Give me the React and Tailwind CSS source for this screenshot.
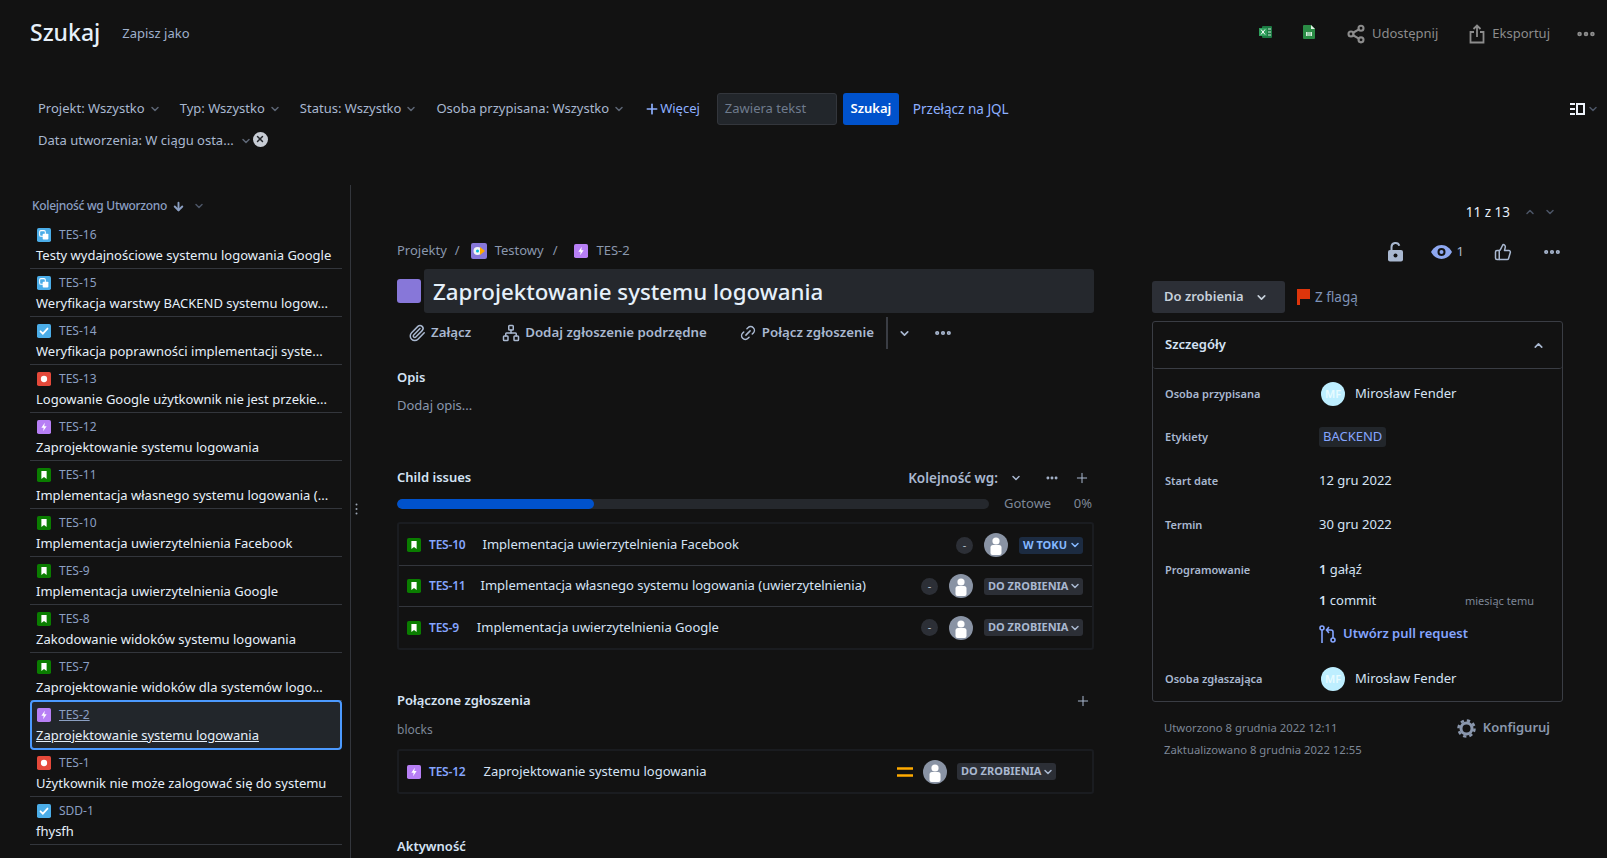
import { ArrowDown, ChevronDown, ChevronUp, Link2, MoreHorizontal, Network, Paperclip, Plus, Share2, ThumbsUp, X } from 'lucide-react'

const ISSUES = [
  { id: 'TES-16', type: 'subtask', title: 'Testy wydajnościowe systemu logowania Google' },
  { id: 'TES-15', type: 'subtask', title: 'Weryfikacja warstwy BACKEND systemu logow...' },
  { id: 'TES-14', type: 'task', title: 'Weryfikacja poprawności implementacji syste...' },
  { id: 'TES-13', type: 'bug', title: 'Logowanie Google użytkownik nie jest przekie...' },
  { id: 'TES-12', type: 'epic', title: 'Zaprojektowanie systemu logowania' },
  { id: 'TES-11', type: 'story', title: 'Implementacja własnego systemu logowania (...' },
  { id: 'TES-10', type: 'story', title: 'Implementacja uwierzytelnienia Facebook' },
  { id: 'TES-9', type: 'story', title: 'Implementacja uwierzytelnienia Google' },
  { id: 'TES-8', type: 'story', title: 'Zakodowanie widoków systemu logowania' },
  { id: 'TES-7', type: 'story', title: 'Zaprojektowanie widoków dla systemów logo...' },
  { id: 'TES-2', type: 'epic', title: 'Zaprojektowanie systemu logowania', selected: true },
  { id: 'TES-1', type: 'bug', title: 'Użytkownik nie może zalogować się do systemu' },
  { id: 'SDD-1', type: 'task', title: 'fhysfh' },
]

const FILTERS = ['Projekt: Wszystko', 'Typ: Wszystko', 'Status: Wszystko', 'Osoba przypisana: Wszystko']

function IssueIcon({ type, size = 14 }) {
  const bg = { subtask: '#4bade8', task: '#4bade8', bug: '#e5493a', epic: '#b77ff5', story: '#0a7d00' }[type]
  return (
    <svg width={size} height={size} viewBox="0 0 16 16" className="shrink-0">
      <rect width="16" height="16" rx="2" fill={bg} />
      {type === 'subtask' && (
        <>
          <rect x="3" y="3" width="6.5" height="6.5" rx="1.5" fill="none" stroke="#fff" strokeWidth="1.2" />
          <rect x="6.5" y="6.5" width="6.5" height="6.5" rx="1" fill="#fff" />
        </>
      )}
      {type === 'task' && <path d="M4 8.3l2.7 2.7L12 5.2" fill="none" stroke="#fff" strokeWidth="2" strokeLinecap="round" />}
      {type === 'bug' && <circle cx="8" cy="8" r="3.6" fill="#fff" />}
      {type === 'epic' && <path d="M8.900 3.200L5 8.900h2.600l-.6 3.900 4-5.800H8.300z" fill="#fff" />}
      {type === 'story' && <path d="M5 3.500h6v9L8 10.200 5 12.500z" fill="#fff" />}
    </svg>
  )
}

function Avatar() {
  return (
    <svg width="24" height="24" viewBox="0 0 24 24" className="shrink-0">
      <circle cx="12" cy="12" r="12" fill="#8993a4" />
      <circle cx="12" cy="8" r="3.600" fill="#fff" />
      <path d="M6.500 14.500a2.500 2.500 0 0 1 2.500-2.500h6a2.500 2.500 0 0 1 2.500 2.500V20a2 2 0 0 1-2 2h-7a2 2 0 0 1-2-2z" fill="#fff" />
    </svg>
  )
}

function UserBadge() {
  return (
    <div className="flex h-6 w-6 shrink-0 items-center justify-center rounded-full bg-[#bdeeff] text-[11px] font-semibold text-[#e8fbff]">
      MF
    </div>
  )
}

function StatusPill({ label, blue }) {
  return (
    <span
      className={[
        'flex h-[17px] items-center justify-between rounded-[3px] pl-[4px] pr-[2px] text-[11px] font-bold',
        blue ? 'w-[64px] bg-[#1c2b41] text-[#85b8ff]' : 'w-[99px] bg-[#2c2f36] text-[#a9b8d0]',
      ].join(' ')}
    >
      {label}
      <ChevronDown size={12} strokeWidth={3} />
    </span>
  )
}

function ChildRow({ id, title, titleGap, status, blue, border }) {
  return (
    <div className={['flex h-[41px] items-center pl-[8px] pr-[9px]', border ? 'border-b border-[#33363c]' : ''].join(' ')}>
      <IssueIcon type="story" />
      <span className="ml-[8px] text-[12px] font-semibold tracking-[-0.2px] text-[#85a5ff]">{id}</span>
      <span className={['text-[13px] text-[#d5e3f5]', titleGap].join(' ')}>{title}</span>
      <span className="ml-auto flex h-[17px] w-[17px] items-center justify-center rounded-full bg-[#2c2f36] text-[11px] text-[#b6c2cf]">-</span>
      <span className="mx-[11px]"><Avatar /></span>
      <StatusPill label={status} blue={blue} />
    </div>
  )
}

function DetailRow({ label, children, className }) {
  return (
    <div className={['flex items-center', className].join(' ')}>
      <span className="w-[154px] shrink-0 text-[11px] font-semibold text-[#a9b8d0]">{label}</span>
      {children}
    </div>
  )
}

export default function App() {
  return (
    <div className="h-[858px] w-full overflow-hidden bg-[#121212] font-['Noto_Sans',sans-serif] text-[13px] text-[#c7d1db]">
      <header className="flex h-[64px] items-center pl-[30px] pr-[10px]">
        <h1 className="text-[23px] font-medium text-[#e6f0fa]">Szukaj</h1>
        <span className="ml-[22px] mt-[3px] text-[13px] text-[#9fb0cc]">Zapisz jako</span>
        <div className="ml-auto mt-[3px] flex items-center text-[#8c8c8c]">
          <svg width="13" height="12" viewBox="0 0 13 12" className="mb-[4px]">
            <rect x="3" width="10" height="12" rx="1" fill="#1d7a43" />
            <rect y="2" width="8" height="8" fill="#2e9e5b" />
            <path d="M2 3.500l4 5M6 3.500l-4 5" stroke="#fff" strokeWidth="1" />
            <path d="M9 3h3M9 6h3M9 9h3" stroke="#cfe9da" strokeWidth="1" />
          </svg>
          <svg width="12" height="14" viewBox="0 0 12 14" className="mb-[4px] ml-[31px]">
            <path d="M1 0h7l4 4v9a1 1 0 0 1-1 1H1a1 1 0 0 1-1-1V1a1 1 0 0 1 1-1z" fill="#2a8c45" />
            <path d="M8 0l4 4H8z" fill="#e2f3e6" />
            <rect x="3" y="7" width="6" height="4" fill="#d8efdf" />
            <path d="M5 7v4M7 7v4" stroke="#2a8c45" strokeWidth=".7" />
          </svg>
          <Share2 size={20} strokeWidth={2.500} className="ml-[31px]" />
          <span className="ml-[6px]">Udostępnij</span>
          <svg width="16" height="20" viewBox="0 0 16 20" fill="none" stroke="currentColor" strokeWidth="1.800" className="ml-[31px]">
            <path d="M5 8H1.500v10.500h13V8H11M8 13V1.500M4.500 5L8 1.500 11.500 5" />
          </svg>
          <span className="ml-[7px]">Eksportuj</span>
          <MoreHorizontal size={22} strokeWidth={3} className="ml-[25px]" />
        </div>
      </header>

      <div className="h-[121px] pl-[38px] pr-[8px] pt-[28px]">
        <div className="flex h-[34px] items-center text-[#a9b8d0]">
          {FILTERS.map((f) => (
            <span key={f} className="mr-[19px] flex items-center">
              {f}
              <ChevronDown size={12} strokeWidth={3} className="ml-[4px] text-[#5d6675]" />
            </span>
          ))}
          <span className="flex items-center text-[#8eb0ff]">
            <Plus size={16} strokeWidth={2.500} />
            Więcej
          </span>
          <span className="ml-[17px] flex h-[32px] w-[120px] items-center rounded-[3px] border border-[#33363c] bg-[#22262b] px-[7px] text-[#6f7b8d]">
            Zawiera tekst
          </span>
          <span className="ml-[6px] flex h-[32px] w-[56px] items-center justify-center rounded-[3px] bg-[#0052cc] text-[13px] font-semibold text-white">
            Szukaj
          </span>
          <span className="ml-[14px] text-[13.500px] text-[#8eb0ff]">Przełącz na JQL</span>
          <span className="ml-auto flex items-center">
            <svg width="15" height="12" viewBox="0 0 15 12">
              <path d="M0 1h5M0 6h5M0 11h5" stroke="#eef3fb" strokeWidth="2" />
              <rect x="7" y="1" width="7" height="10" fill="none" stroke="#eef3fb" strokeWidth="2" />
            </svg>
            <ChevronDown size={12} strokeWidth={3} className="ml-[2px] text-[#4c5566]" />
          </span>
        </div>
        <div className="flex h-[30px] items-center text-[#a9b8d0]">
          Data utworzenia: W ciągu osta...
          <ChevronDown size={12} strokeWidth={3} className="ml-[6px] text-[#5d6675]" />
          <span className="mb-[4px] ml-[1px] flex h-[15px] w-[15px] items-center justify-center rounded-full bg-[#c7ccd4] text-[#23262b]">
            <X size={10} strokeWidth={3.500} />
          </span>
        </div>
      </div>

      <div className="flex">
        <aside className="h-[673px] w-[351px] shrink-0 border-r border-[#33363c] pl-[30px] pr-[8px]">
          <div className="flex h-[36px] items-center pl-[2px] pt-[6px] text-[12px] font-medium tracking-[-0.3px] text-[#8b9fc2]">
            Kolejność wg Utworzono
            <ArrowDown size={13} strokeWidth={3.500} className="ml-[5px]" />
            <ChevronDown size={12} strokeWidth={3} className="ml-[8px] text-[#4c5566]" />
          </div>
          {ISSUES.map((i) =>
            i.selected ? (
              <div key={i.id} className="relative mx-px h-[48px] rounded-[3px] bg-[#22262b] pl-[5px] outline-2 outline-offset-[-1px] outline-[#4c9aff]">
                <div className="flex h-[27px] items-center pl-[1px]">
                  <IssueIcon type={i.type} />
                  <span className="ml-[5px] pl-[3px] text-[12px] text-[#8b9fc2] underline">{i.id}</span>
                </div>
                <div className="text-[13px] leading-[14px] text-[#e6f0fa] underline">{i.title}</div>
              </div>
            ) : (
              <div key={i.id} className="h-[48px] border-b border-[#33363c] pl-[6px]">
                <div className="flex h-[27px] items-center pl-[1px]">
                  <IssueIcon type={i.type} />
                  <span className="ml-[8px] text-[12px] text-[#8b9fc2]">{i.id}</span>
                </div>
                <div className="whitespace-nowrap text-[13px] leading-[14px] text-[#e6f0fa]">{i.title}</div>
              </div>
            ),
          )}
        </aside>
        <div className="relative">
          <span className="absolute left-[4px] top-[318px] text-[#9aa4b2]">
            <svg width="3" height="12" viewBox="0 0 3 12" fill="currentColor">
              <circle cx="1.500" cy="1.500" r="1" />
              <circle cx="1.500" cy="6" r="1" />
              <circle cx="1.500" cy="10.500" r="1" />
            </svg>
          </span>
        </div>

        <main className="ml-[46px] w-[697px] shrink-0 pt-[56px]">
          <div className="flex h-[20px] items-center text-[13px] text-[#8a97ad]">
            Projekty
            <span className="ml-[8px] mr-[11px]">/</span>
            <svg width="16" height="16" viewBox="0 0 16 16" className="mr-[8px]">
              <rect width="16" height="16" rx="2" fill="#8777d9" />
              <circle cx="6.500" cy="8" r="4" fill="#f4f5f7" />
              <circle cx="6.500" cy="8" r="1.500" fill="#00b8d9" />
              <path d="M9 4l5 4-5 4z" fill="#ffab00" />
            </svg>
            Testowy
            <span className="mx-[9px]">/</span>
            <span className="ml-[7px] mr-[9px]"><IssueIcon type="epic" /></span>
            TES-2
          </div>
          <div className="mt-[8px] flex items-center">
            <span className="h-[24px] w-[24px] rounded-[3px] bg-[#8777d9]" />
            <h2 className="ml-[3px] flex h-[44px] flex-1 items-center rounded-[3px] bg-[#25282d] pl-[9px] pt-[2px] text-[22.300px] font-medium text-[#e6f0fa]">
              Zaprojektowanie systemu logowania
            </h2>
          </div>
          <div className="mt-[4px] flex h-[32px] items-center pl-[11px] text-[13.300px] font-semibold text-[#a9b8d0]">
            <Paperclip size={18} strokeWidth={2} />
            <span className="ml-[5px]">Załącz</span>
            <Network size={18} strokeWidth={2} className="ml-[31px]" />
            <span className="ml-[5px]">Dodaj zgłoszenie podrzędne</span>
            <Link2 size={18} strokeWidth={2} className="ml-[32px] -rotate-45" />
            <span className="ml-[5px]">Połącz zgłoszenie</span>
            <span className="ml-[12px] h-[32px] w-[2px] bg-[#3a3d44]" />
            <ChevronDown size={13} strokeWidth={3} className="ml-[10px]" />
            <MoreHorizontal size={20} strokeWidth={3} className="ml-[22px]" />
          </div>
          <div className="mt-[18px] text-[13px] font-semibold leading-[20px] text-[#d5e3f5]">Opis</div>
          <div className="mt-[8px] text-[13px] leading-[20px] text-[#8a97ad]">Dodaj opis...</div>

          <div className="mt-[53px] flex h-[20px] items-center">
            <span className="text-[13px] font-semibold text-[#d5e3f5]">Child issues</span>
            <span className="ml-auto text-[13.500px] font-semibold text-[#a9b8d0]">Kolejność wg:</span>
            <ChevronDown size={12} strokeWidth={3} className="ml-[12px] text-[#a9b8d0]" />
            <MoreHorizontal size={14} strokeWidth={3} className="ml-[23px] text-[#a9b8d0]" />
            <Plus size={16} strokeWidth={1.500} className="ml-[15px] mr-[4px] text-[#a9b8d0]" />
          </div>
          <div className="mt-[11px] flex h-[10px] items-center">
            <div className="h-[10px] w-[592px] overflow-hidden rounded-full bg-[#25282d]">
              <div className="h-full w-[197px] rounded-full bg-[#0052cc]" />
            </div>
            <span className="ml-[15px] text-[13px] text-[#7d8797]">Gotowe</span>
            <span className="ml-auto mr-[2px] text-[13px] text-[#7d8797]">0%</span>
          </div>
          <div className="mt-[13px] rounded-[3px] border-2 border-[#1a1c20] pt-px">
            <ChildRow id="TES-10" title="Implementacja uwierzytelnienia Facebook" titleGap="ml-[17px]" status="W TOKU" blue border />
            <ChildRow id="TES-11" title="Implementacja własnego systemu logowania (uwierzytelnienia)" titleGap="ml-[15px]" status="DO ZROBIENIA" border />
            <ChildRow id="TES-9" title="Implementacja uwierzytelnienia Google" titleGap="ml-[18px]" status="DO ZROBIENIA" />
          </div>

          <div className="mt-[41px] flex h-[20px] items-center">
            <span className="text-[13px] font-semibold text-[#d5e3f5]">Połączone zgłoszenia</span>
            <Plus size={16} strokeWidth={1.500} className="ml-auto mr-[3px] text-[#a9b8d0]" />
          </div>
          <div className="mt-[9px] text-[12px] leading-[20px] text-[#7d8797]">blocks</div>
          <div className="mt-[9px] flex h-[45px] items-center rounded-[3px] border-2 border-[#1a1c20] pl-[8px]">
            <IssueIcon type="epic" />
            <span className="ml-[8px] text-[12px] font-semibold tracking-[-0.2px] text-[#85a5ff]">TES-12</span>
            <span className="ml-[18px] text-[13px] text-[#d5e3f5]">Zaprojektowanie systemu logowania</span>
            <svg width="16" height="10" viewBox="0 0 16 10" className="ml-auto">
              <path d="M0 1.500h16M0 8.500h16" stroke="#ffab00" strokeWidth="2.500" />
            </svg>
            <span className="mx-[10px]"><Avatar /></span>
            <span className="mr-[36px]"><StatusPill label="DO ZROBIENIA" /></span>
          </div>
          <div className="mt-[42px] text-[13px] font-semibold leading-[20px] text-[#d5e3f5]">Aktywność</div>
        </main>

        <section className="ml-[58px] w-[411px] shrink-0">
          <div className="flex h-[54px] items-center justify-end pr-[7px] text-[13.500px] text-[#e6f0fa]">
            11 z 13
            <ChevronUp size={12} strokeWidth={3} className="ml-[14px] text-[#4c5566]" />
            <ChevronDown size={12} strokeWidth={3} className="ml-[8px] text-[#4c5566]" />
          </div>
          <div className="mt-[1px] flex h-[24px] items-center justify-end pr-px text-[#a9b8d0]">
            <svg width="15" height="20" viewBox="0 0 15 20" className="mr-[28px]">
              <path d="M3.500 8V5a4 4 0 0 1 7.800-1.200" fill="none" stroke="#a9b8d0" strokeWidth="2" />
              <rect y="8" width="15" height="11.500" rx="2" fill="#a9b8d0" />
              <circle cx="7.500" cy="13.500" r="2" fill="#121212" />
            </svg>
            <svg width="21" height="14" viewBox="0 0 21 14" className="mr-[5px]">
              <path d="M10.500 0C5.500 0 1.800 3.500 0 7c1.800 3.500 5.500 7 10.500 7S19.200 10.500 21 7C19.200 3.500 15.500 0 10.500 0z" fill="#8ea8f0" />
              <circle cx="10.500" cy="7" r="4" fill="#121212" />
              <circle cx="10.500" cy="7" r="2" fill="#8ea8f0" />
            </svg>
            <span className="mr-[30px] text-[13px]">1</span>
            <ThumbsUp size={18} strokeWidth={2} className="mr-[30px]" />
            <MoreHorizontal size={20} strokeWidth={3} />
          </div>
          <div className="mt-[17px] flex h-[32px] items-center">
            <span className="flex h-[32px] w-[133px] items-center justify-between rounded-[3px] bg-[#2c2f36] pl-[12px] pr-[17px] text-[13px] font-semibold text-[#c7d1db]">
              Do zrobienia
              <ChevronDown size={13} strokeWidth={3} />
            </span>
            <svg width="13" height="16" viewBox="0 0 13 16" className="ml-[12px]">
              <path d="M0 0h13v10H3v6H0z" fill="#de350b" />
            </svg>
            <span className="ml-[5px] text-[13.500px] text-[#7f93b8]">Z flagą</span>
          </div>

          <div className="mt-[8px] h-[381px] rounded-[3px] border border-[#3a3d44]">
            <div className="flex h-[47px] items-center justify-between rounded-[3px] border-b border-[#3a3d44] pl-[12px] pr-[17px]">
              <span className="text-[13px] font-semibold text-[#d5e3f5]">Szczegóły</span>
              <ChevronUp size={13} strokeWidth={3} className="text-[#a9b8d0]" />
            </div>
            <div className="pl-[12px] pr-[28px]">
              <DetailRow label="Osoba przypisana" className="mt-[13px] h-[24px]">
                <span className="ml-[2px]"><UserBadge /></span>
                <span className="ml-[10px] text-[13px] text-[#d5e3f5]">Mirosław Fender</span>
              </DetailRow>
              <DetailRow label="Etykiety" className="mt-[19px] h-[24px]">
                <span className="flex h-[20px] items-center rounded-[3px] bg-[#22262b] px-[4px] text-[13px] text-[#85a5ff]">BACKEND</span>
              </DetailRow>
              <DetailRow label="Start date" className="mt-[20px] h-[24px]">
                <span className="text-[13px] text-[#d5e3f5]">12 gru 2022</span>
              </DetailRow>
              <DetailRow label="Termin" className="mt-[20px] h-[24px]">
                <span className="text-[13px] text-[#d5e3f5]">30 gru 2022</span>
              </DetailRow>
              <DetailRow label="Programowanie" className="mt-[21px] h-[24px]">
                <span className="text-[13px] text-[#d5e3f5]"><b className="font-semibold">1</b> gałąź</span>
              </DetailRow>
              <DetailRow label="" className="mt-[7px] h-[24px]">
                <span className="text-[13px] text-[#d5e3f5]"><b className="font-semibold">1</b> commit</span>
                <span className="ml-auto text-[11px] text-[#7d8797]">miesiąc temu</span>
              </DetailRow>
              <DetailRow label="" className="mt-[9px] h-[24px]">
                <svg width="17" height="18" viewBox="0 0 17 18" fill="none" stroke="#85a5ff" strokeWidth="1.600">
                  <circle cx="3" cy="3" r="2" />
                  <path d="M3 5v13" />
                  <circle cx="14" cy="15" r="2" />
                  <path d="M14 13V7a2 2 0 0 0-2-2H8M10 2L7.500 5 10 8" />
                </svg>
                <span className="ml-[7px] text-[13px] font-semibold text-[#85a5ff]">Utwórz pull request</span>
              </DetailRow>
              <DetailRow label="Osoba zgłaszająca" className="mt-[21px] h-[24px]">
                <span className="ml-[2px]"><UserBadge /></span>
                <span className="ml-[10px] text-[13px] text-[#d5e3f5]">Mirosław Fender</span>
              </DetailRow>
            </div>
          </div>

          <div className="mt-[15px] flex pl-[12px] pr-[13px]">
            <div className="text-[11.300px] leading-[22px] text-[#7d8797]">
              <div>Utworzono 8 grudnia 2022 12:11</div>
              <div>Zaktualizowano 8 grudnia 2022 12:55</div>
            </div>
            <div className="ml-auto flex h-[22px] items-center text-[13px] font-semibold text-[#8a97ad]">
              <svg width="19" height="19" viewBox="0 0 19 19" fill="none" stroke="currentColor">
                <circle cx="9.500" cy="9.500" r="5.500" strokeWidth="3" />
                <circle cx="9.500" cy="9.500" r="8" strokeWidth="2.500" strokeDasharray="3.300 3" />
              </svg>
              <span className="ml-[7px]">Konfiguruj</span>
            </div>
          </div>
        </section>
      </div>
    </div>
  )
}
